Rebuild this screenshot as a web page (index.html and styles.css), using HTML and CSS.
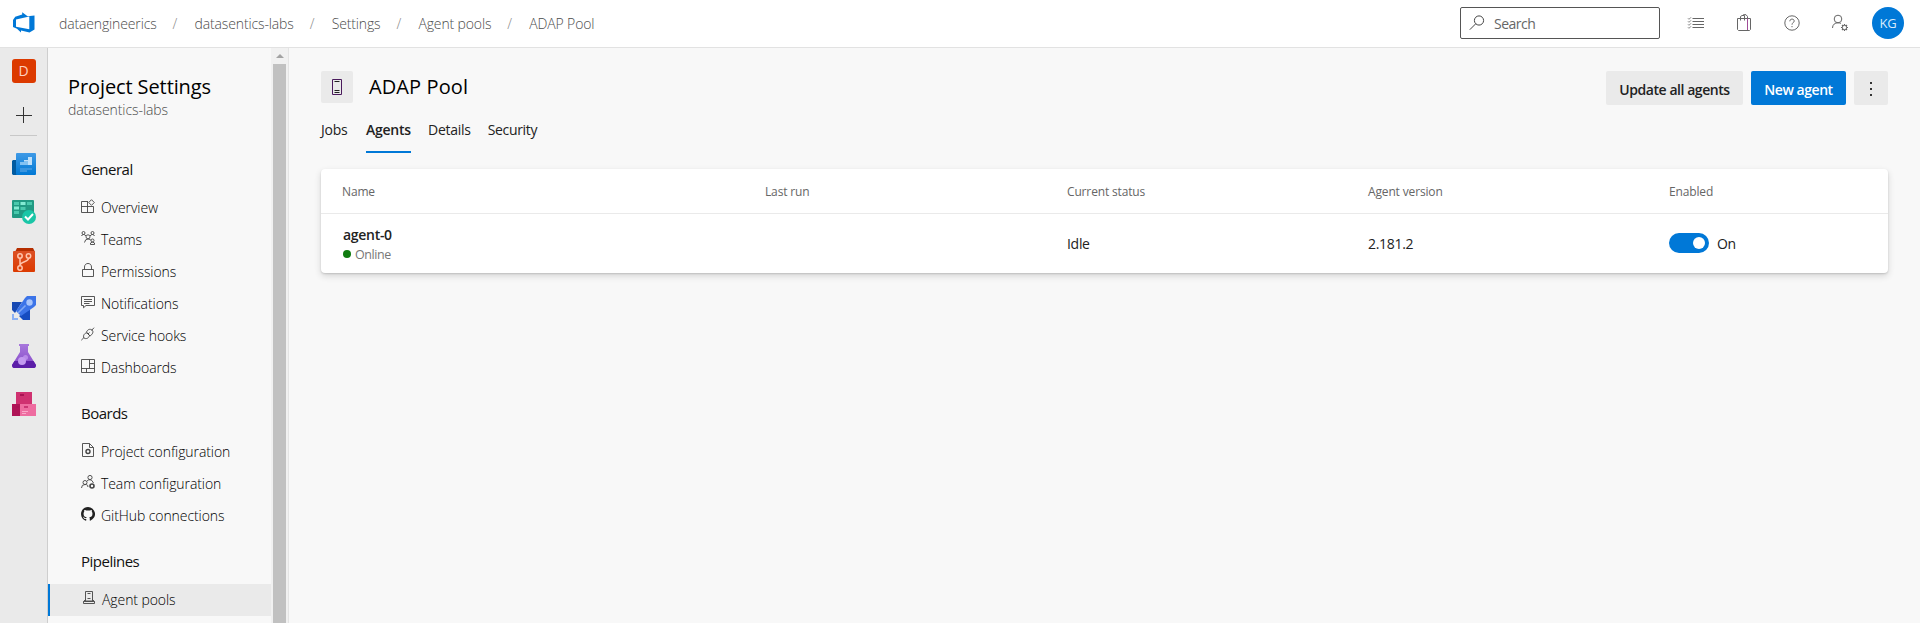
FILE: index.html
```html
<!DOCTYPE html>
<html lang="en">
<head>
<meta charset="utf-8">
<title>ADAP Pool - Agents</title>
<link rel="stylesheet" href="styles.css">
</head>
<body>
<header class="topbar">
  <svg class="logo" width="22" height="22" viewBox="0 0 22 22"><path fill="#0078d7" fill-rule="evenodd" d="M0 8 2.200 4.800 9.200 2.500 9.200 .2 14.600 4.200 21.500 3.600 21.500 17.500 16.500 20.500 8 18.500 8 20.600 4 16.800 0 15ZM3 7.500 3 14.800 16.300 17.200 16.300 4.600Z"/></svg>
  <nav class="crumbs">
    <a>dataengineerics</a><i>/</i><a>datasentics-labs</a><i>/</i><a>Settings</a><i>/</i><a>Agent pools</a><i>/</i><a>ADAP Pool</a>
  </nav>
  <div class="search">
    <svg width="16" height="16" viewBox="0 0 16 16" fill="none" stroke="#444" stroke-width="1"><circle cx="10" cy="5.500" r="4.600"/><path d="M6.700 8.800.8 14.700"/></svg>
    <span>Search</span>
  </div>
  <div class="tools">
    <svg width="18" height="16" viewBox="0 0 18 16" fill="none" stroke="#666"><path d="M5.500 3.500H17M5.500 6.500H17M5.500 9.500H17M5.500 12.500H17"/><path stroke-width=".8" d="m1 3.300 1 1 2-2M1 6.300l1 1 2-2M1 9.300l1 1 2-2M1 12.300l1 1 2-2"/></svg>
    <svg width="16" height="18" viewBox="0 0 16 18" fill="none" stroke="#666"><path d="M1.500 4.500H14.500V15.500L13.500 16.500H2.500L1.500 15.500ZM4.500 6.500V2.500L6 1.500H8.500V6.500M6.500 1.500 7.500 .7H10L11.500 2.500V4"/><path stroke="#a04d97" d="M11.500 4.500V16"/></svg>
    <svg width="16" height="16" viewBox="0 0 16 16" fill="none" stroke="#666"><circle cx="8" cy="8" r="7.200"/><path d="M5.800 6.300C5.800 3.300 10.200 3.500 10.200 6 10.200 7.600 8 7.800 8 9.700M8 11v1.200"/></svg>
    <svg width="18" height="18" viewBox="0 0 18 18" fill="none" stroke="#666"><circle cx="7" cy="5" r="3.800"/><path d="M1.500 14C1.500 10.500 4 8.800 7 8.800 8 8.800 9 9 9.800 9.500"/><circle cx="13.500" cy="13.500" r="2.200"/><path stroke-width="1.200" d="M13.500 10v1.300M13.500 15.700V17M10 13.500h1.300M15.700 13.500H17M11 11l1 1M15 15l1 1M16 11l-1 1M12 15l-1 1"/></svg>
  </div>
  <div class="avatar">KG</div>
</header>
<div class="body">
  <aside class="rail">
    <div class="project">D</div>
    <svg class="plus" width="16" height="16" viewBox="0 0 16 16"><path stroke="#333" d="M0 8.500H16M7.500 0V16"/></svg>
    <hr>
    <div class="hubs">
      <svg width="24" height="24" viewBox="0 0 24 24"><defs><linearGradient id="ov" x2="0" y2="1"><stop stop-color="#3f9ae6"/><stop offset="1" stop-color="#0078d4"/></linearGradient></defs><path fill="#005ba1" d="M1 8H5V23H1L0 22V9Z"/><rect x="4" y="1" width="20" height="22" rx="1" fill="url(#ov)"/><path fill="#83c2f2" d="M8 10h4V8h4v5H8Z"/><path fill="#bfe0fa" d="M12 8h4V5h4v8h-4V9h-4Z"/><path fill="#3a95df" d="M8 16h12v2h-5v2H8Z"/></svg>
      <svg width="24" height="24" viewBox="0 0 24 24"><rect width="22" height="18" rx="1" fill="#219a83"/><path fill="#49c9ad" d="M2 2h5v3H2ZM15 2h5v3h-5ZM8.500 7h5v3h-5ZM2 11h5v3H2Z"/><path fill="#83ebd3" d="M8.500 2h5v3h-5ZM2 6.500h5v3H2Z"/><circle cx="17" cy="17" r="7" fill="#1ac6a7"/><path fill="none" stroke="#fff" stroke-width="2" d="m13 16.500 3 3 5-5.500"/></svg>
      <svg width="24" height="24" viewBox="0 0 24 24"><defs><linearGradient id="rp" x2="0" y2="1"><stop stop-color="#dc5024"/><stop offset="1" stop-color="#dc3a00"/></linearGradient></defs><path fill="#b52e00" d="M5 0H21L23 4H3Z"/><rect x="1" y="3" width="22" height="21" rx="1" fill="url(#rp)"/><g fill="none" stroke="#ffc5ad" stroke-width="1.500"><circle cx="8" cy="8" r="2.200"/><circle cx="16.500" cy="8" r="2.200"/><circle cx="8" cy="20" r="2.200"/><path d="M8 10.500V17.500M16.500 10.500C16.500 14 8 13.500 8 17.500"/></g></svg>
      <svg width="24" height="24" viewBox="0 0 24 24"><path fill="#1749b3" d="M0 6H10L3 17 0 14Z"/><path fill="#164cc0" d="M18 13V24H11L7 20Z"/><path fill="#3c74e8" d="M4 15 13 2 15 0H24V9L22 11 9 20Z"/><circle cx="17.500" cy="6.500" r="3.200" fill="#a8c5fb"/><path stroke="#80a8f4" stroke-width="1.600" d="m6 17 7.500-7.500"/><path fill="#8bb0f4" d="M0 18H2V22H6V24H0Z"/></svg>
      <svg width="24" height="24" viewBox="0 0 24 24"><defs><linearGradient id="tp" x2="0" y2="1"><stop stop-color="#a878dc"/><stop offset="1" stop-color="#8548c8"/></linearGradient></defs><path fill="url(#tp)" d="M7 0H17V2H16V8L24 21C24 23 23 24 22 24H2C1 24 0 23 0 21L8 8V2H7Z"/><path fill="#5c1fa8" d="M2.500 17H21.500L24 21C24 23 23 24 22 24H2C1 24 0 23 0 21Z"/><circle cx="10" cy="17" r="4" fill="#c39af0"/><circle cx="13.500" cy="13.500" r="2.500" fill="#c195ed" opacity=".8"/></svg>
      <svg width="24" height="24" viewBox="0 0 24 24"><rect x="4" width="16" height="12" fill="#cf3170"/><rect y="12" width="8" height="12" fill="#af1456"/><rect x="8" y="12" width="16" height="12" fill="#ee6ca0"/><path fill="#a91353" d="M8 2h4v2H8ZM4 14h3v2H4Z"/><path fill="#cb3574" d="M12 14h4v2h-4Z"/><path stroke="#f9a9ca" d="M10 19.500h6M10 21.500h4"/></svg>
    </div>
  </aside>
  <aside class="settings">
    <div class="settings-list">
      <h2>Project Settings</h2>
      <p class="sub">datasentics-labs</p>
      <h3>General</h3>
      <a class="item"><svg class="ic" viewBox="0 0 14 14"><path d="M7 2.500H.5V13.500H12.500V7.500M.5 7.500H12.500M6.500 2.500V13.500M10.500 .7 13.300 3.500 10.500 6.300 7.700 3.500Z"/></svg><span>Overview</span></a>
      <a class="item"><svg class="ic" viewBox="0 0 14 14"><circle cx="2.500" cy="2" r="1.500"/><circle cx="11.500" cy="2" r="1.500"/><circle cx="7" cy="5.800" r="2"/><circle cx="11.500" cy="9.500" r="1.500"/><path d="M.5 5Q1 3.500 2.500 3.500T5 5M13.500 5Q13 3.500 11.500 3.500T9 5M3.500 11.500Q4 8 7 8T9.800 9.500M9.500 13.500V12q2-2 4 0v1.500Z"/></svg><span>Teams</span></a>
      <a class="item"><svg class="ic" viewBox="0 0 14 14"><path d="M1.500 6.500H12.500V13.500H1.500ZM3.500 6.500V4C3.500-.7 10.500-.7 10.500 4V6.500"/></svg><span>Permissions</span></a>
      <a class="item"><svg class="ic" viewBox="0 0 14 14"><path d="M.5 1.500H13.500V10.500H5L2.500 12.800V10.500H.5ZM3 4.500H11M3 6.500H11M3 8.500H8.500"/></svg><span>Notifications</span></a>
      <a class="item"><svg class="ic" viewBox="0 0 14 14"><path d="M.3 13.200 3 10.500M10.500 3.500 13 .7M3 11C1.500 8.500 4 5.500 6 6L8.500 8.500C8 11 5 12.500 3 11ZM5.500 5C6.500 2.500 9 1.500 11 3S11.500 7.500 9 9ZM7 7 8.500 5.500"/></svg><span>Service hooks</span></a>
      <a class="item"><svg class="ic" viewBox="0 0 14 14"><path d="M.5 .5H13.500V13.500H.5ZM8.500 .5V9.500M.5 9.500H13.500M8.500 4.500H13.500M5.500 9.500V13.500"/></svg><span>Dashboards</span></a>
      <h3>Boards</h3>
      <a class="item"><svg class="ic" viewBox="0 0 14 14"><path d="M1.500 .5H8.500L12.500 4.500V13.500H1.500ZM8.500 .5V4.500H12.500"/><circle cx="7" cy="8.500" r="2" stroke-width="1.400"/></svg><span>Project configuration</span></a>
      <a class="item"><svg class="ic" viewBox="0 0 14 14"><circle cx="9" cy="2.500" r="2.100"/><circle cx="4" cy="7.500" r="2"/><path d="M.5 13Q.5 9.500 4 9.500T6.800 12M6 6Q7 4.700 9 4.700T12.500 8"/><circle cx="11" cy="11" r="2" stroke-width="1.600"/></svg><span>Team configuration</span></a>
      <a class="item"><svg class="ic" viewBox="0 0 16 16"><path fill="#222" stroke="none" d="M8 0C3.580 0 0 3.580 0 8c0 3.540 2.290 6.530 5.470 7.590.4.070.55-.17.55-.38 0-.19-.01-.82-.01-1.490-2.010.37-2.530-.49-2.690-.94-.09-.23-.48-.94-.82-1.130-.28-.15-.68-.52-.01-.53.63-.01 1.080.58 1.230.82.72 1.210 1.870.87 2.330.66.070-.52.28-.87.51-1.070-1.780-.2-3.640-.89-3.640-3.950 0-.87.31-1.590.82-2.150-.08-.2-.36-1.020.08-2.120 0 0 .67-.21 2.200.82a7.600 7.600 0 0 1 4 0c1.530-1.040 2.200-.82 2.200-.82.44 1.100.16 1.920.08 2.120.51.56.82 1.270.82 2.150 0 3.070-1.870 3.750-3.650 3.950.29.25.54.73.54 1.480 0 1.070-.01 1.930-.01 2.200 0 .21.15.46.55.38A8 8 0 0 0 8 0Z"/></svg><span>GitHub connections</span></a>
      <h3>Pipelines</h3>
      <a class="item selected"><svg class="ic" viewBox="0 0 14 14"><path d="M3.500 .5H10.500V10H3.500ZM3.500 8.500 1.500 10.500V12.500H12.500V10.500L10.500 8.500M1.500 10.500H12.500M5.500 2.500H8.500M5.500 7.500H8.500"/></svg><span>Agent pools</span></a>
    </div>
    <div class="scrollbar"><b class="arrow"></b><b class="thumb"></b></div>
  </aside>
  <main>
    <div class="head">
      <div class="pool"><svg width="10" height="16" viewBox="0 0 10 16" fill="none" stroke="#222"><path stroke="#4a1a5c" d="M.5 .5H9.500V15.500H.5Z"/><path d="M2.500 2.500h5M2.500 11.500h5M2.500 13.500h5"/></svg></div>
      <h1>ADAP Pool</h1>
      <div class="actions">
        <button class="b-update">Update all agents</button>
        <button class="b-new">New agent</button>
        <button class="b-more"><svg width="4" height="16" viewBox="0 0 4 16" fill="#333"><path d="M1 1h2v2H1ZM1 7h2v2H1ZM1 13h2v2H1Z"/></svg></button>
      </div>
    </div>
    <nav class="tabs"><a>Jobs</a><a class="on">Agents</a><a>Details</a><a>Security</a></nav>
    <section class="card">
      <div class="row th"><span>Name</span><span>Last run</span><span>Current status</span><span>Agent version</span><span>Enabled</span></div>
      <div class="row td">
        <div class="agent"><strong>agent-0</strong><small><i></i>Online</small></div>
        <span></span><span>Idle</span><span>2.181.2</span>
        <div class="switch"><b></b><span>On</span></div>
      </div>
    </section>
  </main>
</div>
</body>
</html>
```
FILE: styles.css
```css
* { box-sizing: border-box; }
body { margin: 0; height: 623px; overflow: hidden; display: flex; flex-direction: column; background: #f8f8f8; color: #222; font: 14px/20px "Open Sans", "Noto Sans", sans-serif; letter-spacing: -0.3px; }
h1, h2, h3, p { margin: 0; }
svg { display: block; flex: none; }
i { font-style: normal; }

.topbar { flex: none; height: 48px; background: #fff; border-bottom: 1px solid #e2e2e2; display: flex; align-items: center; padding: 0 16px 1px 13px; }
.crumbs { display: flex; gap: 16px; margin-left: 24px; padding-top: 2px; color: #4c4c4c; font-weight: 300; letter-spacing: -.14px; }
.crumbs i { width: 6px; color: #888; }
.search { width: 200px; height: 32px; margin-left: auto; border: 1px solid #555; border-radius: 2px; display: flex; align-items: center; padding-left: 8px; gap: 9px; color: #666; letter-spacing: -.5px; }
.search span { padding-top: 2px; }
.tools { display: flex; align-items: center; justify-content: space-between; width: 162px; margin-left: 27px; }
.avatar { width: 32px; height: 32px; margin-left: 23px; border-radius: 50%; background: #0078d7; color: #d8ebfb; text-align: center; line-height: 33px; font-size: 13px; }

.body { flex: 1; display: flex; min-height: 0; }
.rail { width: 48px; flex: none; background: #eaeaea; border-right: 1px solid #cecece; display: flex; flex-direction: column; align-items: center; padding-top: 11px; }
.project { width: 24px; height: 24px; border-radius: 3px; background: #dc3a00; color: #ffd2c0; text-align: center; line-height: 24px; }
.plus { margin-top: 24px; }
.rail hr { width: 27px; margin: 12px 0 0; border: 0; border-top: 1px solid #c8c8c8; }
.hubs { display: flex; flex-direction: column; gap: 24px; margin-top: 16px; }

.settings { width: 241px; flex: none; display: flex; border-right: 1px solid #e4e4e4; }
.settings-list { flex: 1; overflow: hidden; font-weight: 300; letter-spacing: -.08px; }
.settings h2 { margin: 25px 0 0 20px; font-size: 20px; line-height: 28px; font-weight: 500; letter-spacing: -.1px; color: #000; }
.sub { margin: -1px 0 20px 20px; color: #4c4c4c; }
.settings h3 { height: 52px; padding: 7px 0 0 33px; font-size: 15px; line-height: 44px; font-weight: 500; letter-spacing: -.5px; color: #111; }
.item { height: 32px; padding-left: 33px; display: flex; gap: 6px; align-items: center; color: #000; }
.ic { width: 14px; height: 14px; margin-top: -4px; fill: none; stroke: #444; stroke-width: .9; }
.item.selected { background: #eaeaea; border-left: 2px solid #0078d7; padding-left: 32px; }
.scrollbar { width: 17px; flex: none; background: #f1f1f1; display: flex; flex-direction: column; align-items: center; }
.arrow { margin: 6px 0; border: 4px solid transparent; border-top: 0; border-bottom-color: #a3a3a3; }
.thumb { flex: 1; width: 13px; background: #c1c1c1; }

main { flex: 1; padding: 23px 32px 0; }
.head { display: flex; height: 34px; }
.pool { width: 32px; height: 32px; border-radius: 2px; background: #eaeaea; display: flex; align-items: center; justify-content: center; }
h1 { margin-left: 16px; font-size: 20px; line-height: 32px; font-weight: 500; letter-spacing: .1px; color: #000; }
.actions { margin-left: auto; display: flex; gap: 8px; }
button { height: 34px; border: 0; border-radius: 2px; padding: 2px 0 0; background: #eaeaea; color: #222; font: 600 14px "Open Sans", "Noto Sans", sans-serif; letter-spacing: -.45px; display: flex; align-items: center; justify-content: center; }
.b-update { width: 137px; }
.b-new { width: 95px; background: #0078d7; color: #fff; }
.b-more { width: 34px; }
.tabs { display: flex; gap: 17px; height: 48px; color: #222; letter-spacing: -.25px; }
.tabs a { height: 48px; padding-top: 15px; }
.tabs a:first-child { width: 28px; }
.tabs .on { width: 45px; font-weight: 600; border-bottom: 2px solid #0078d7; }
.tabs a:last-child { letter-spacing: -.35px; }
.card { margin-top: 16px; height: 104px; background: #fff; border-radius: 4px; box-shadow: 0 3px 7px rgba(0,0,0,.14), 0 1px 2px rgba(0,0,0,.14); }
.row { display: grid; grid-template-columns: 423px 302px 301px 301px 1fr; padding-left: 21px; align-items: center; }
.th { height: 45px; padding-top: 2px; border-bottom: 1px solid #eaeaea; font-size: 12px; color: #666; letter-spacing: -.15px; }
.td { height: 59px; color: #222; }
.agent { display: flex; flex-direction: column; padding: 1px 0 0 1px; }
.agent strong { font-weight: 600; line-height: 20px; }
.agent small { display: flex; align-items: center; gap: 4px; font-size: 12.500px; line-height: 19px; color: #777; letter-spacing: -.4px; }
.agent i { width: 8px; height: 8px; border-radius: 50%; background: #107c10; }
.switch { display: flex; gap: 8px; align-items: center; margin-top: -1px; }
.switch span { padding-top: 2px; }
.switch b { width: 40px; height: 20px; border-radius: 10px; background: #0078d7; display: flex; align-items: center; justify-content: flex-end; padding-right: 4px; }
.switch b::after { content: ""; width: 12px; height: 12px; border-radius: 50%; background: #fff; }
```
